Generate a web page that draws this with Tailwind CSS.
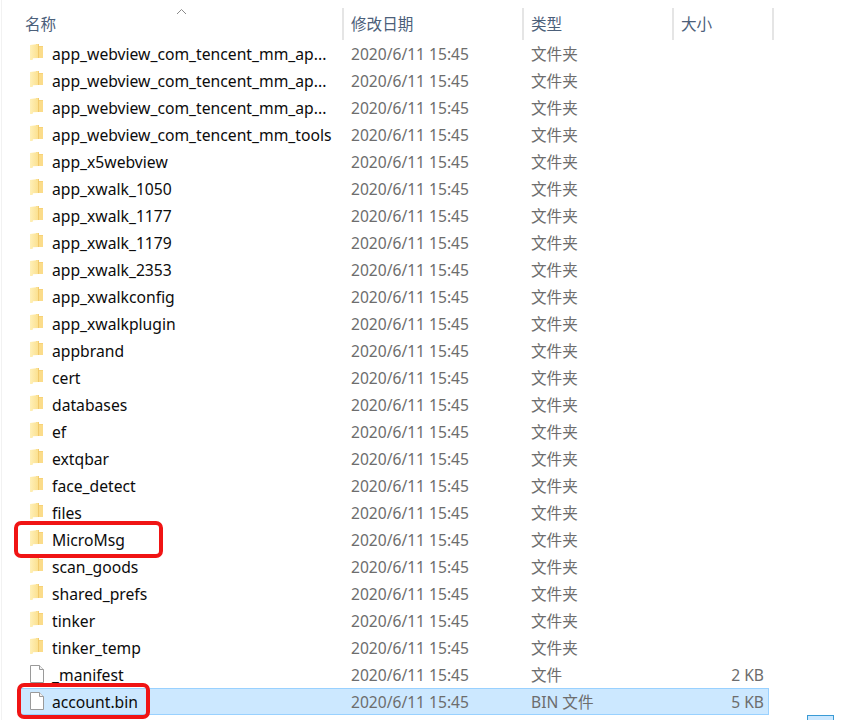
<!DOCTYPE html>
<html>
<head>
<meta charset="utf-8">
<script src="https://cdn.jsdelivr.net/npm/@tailwindcss/browser@4"></script>
</head>
<body class="bg-white">
<svg class="absolute w-0 h-0" width="0" height="0">
  <defs>
    <linearGradient id="g" x1="0" y1="0" x2="1" y2="0"><stop offset="0" stop-color="#fff0b8"/><stop offset="1" stop-color="#fbe08e"/></linearGradient>
    <symbol id="folder" viewBox="0 0 13 16">
      <path d="M6 0h2.500v2h4.500v12H6z" fill="#f7d277"/>
      <path d="M8.500 3H13v11H8.500z" fill="#fbdc8a"/>
      <path d="M0 1L8.500 0V14L3 14.300 2.500 16 0 16z" fill="url(#g)"/>
      <path d="M8.500 0V14" stroke="#eec465" stroke-width="0.8"/>
    </symbol>
    <symbol id="file" viewBox="0 0 16 20">
      <path d="M1.500 1.500h9l4 4v13h-13z" fill="#fff" stroke="#9a9a9a"/>
      <path d="M10.500 1.500v4h4" fill="#f0f0f0" stroke="#9a9a9a"/>
    </symbol>
  </defs>
</svg>
<main class="relative w-[845px] h-[720px] overflow-hidden font-['Noto_Sans','Noto_Sans_CJK_SC',sans-serif] text-[15.6px] leading-[28px] text-[#6d6d6d]">
  <div class="absolute left-[1px] top-0 bottom-0 w-px bg-[#f2f2f2]"></div>
  <svg class="absolute left-[176px] top-[8px]" width="11" height="7" viewBox="0 0 11 7" fill="none" stroke="#8a8a8a"><path d="M1 6L5.500 1.500L10 6"/></svg>

  <header class="mt-[8px] h-[32px] grid grid-cols-[343px_180px_150px_100px] text-[#4c607a] leading-[32px]">
    <div class="pl-[25px] border-r-2 border-[#e5e5e5] -mr-px">名称</div>
    <div class="pl-[8px] border-r-2 border-[#e5e5e5] -mr-px">修改日期</div>
    <div class="pl-[8px] border-r-2 border-[#e5e5e5] -mr-px">类型</div>
    <div class="pl-[8px] border-r-2 border-[#e5e5e5] -mr-px">大小</div>
  </header>

  <section id="list" class="w-[769px]">
    <div class="flex h-[27px]"><svg class="w-[13px] h-4 ml-[30px] mt-[4px]"><use href="#folder"/></svg><span class="w-[300px] pl-[9px] text-[15.7px] text-[#0c0c0c]">app_webview_com_tencent_mm_ap...</span><span class="w-[180px] pl-[8px]">2020/6/11 15:45</span><span class="w-[150px] pl-[8px]">文件夹</span></div>
    <div class="flex h-[27px]"><svg class="w-[13px] h-4 ml-[30px] mt-[4px]"><use href="#folder"/></svg><span class="w-[300px] pl-[9px] text-[15.7px] text-[#0c0c0c]">app_webview_com_tencent_mm_ap...</span><span class="w-[180px] pl-[8px]">2020/6/11 15:45</span><span class="w-[150px] pl-[8px]">文件夹</span></div>
    <div class="flex h-[27px]"><svg class="w-[13px] h-4 ml-[30px] mt-[4px]"><use href="#folder"/></svg><span class="w-[300px] pl-[9px] text-[15.7px] text-[#0c0c0c]">app_webview_com_tencent_mm_ap...</span><span class="w-[180px] pl-[8px]">2020/6/11 15:45</span><span class="w-[150px] pl-[8px]">文件夹</span></div>
    <div class="flex h-[27px]"><svg class="w-[13px] h-4 ml-[30px] mt-[4px]"><use href="#folder"/></svg><span class="w-[300px] pl-[9px] text-[15.7px] text-[#0c0c0c]">app_webview_com_tencent_mm_tools</span><span class="w-[180px] pl-[8px]">2020/6/11 15:45</span><span class="w-[150px] pl-[8px]">文件夹</span></div>
    <div class="flex h-[27px]"><svg class="w-[13px] h-4 ml-[30px] mt-[4px]"><use href="#folder"/></svg><span class="w-[300px] pl-[9px] text-[15.7px] text-[#0c0c0c]">app_x5webview</span><span class="w-[180px] pl-[8px]">2020/6/11 15:45</span><span class="w-[150px] pl-[8px]">文件夹</span></div>
    <div class="flex h-[27px]"><svg class="w-[13px] h-4 ml-[30px] mt-[4px]"><use href="#folder"/></svg><span class="w-[300px] pl-[9px] text-[15.7px] text-[#0c0c0c]">app_xwalk_1050</span><span class="w-[180px] pl-[8px]">2020/6/11 15:45</span><span class="w-[150px] pl-[8px]">文件夹</span></div>
    <div class="flex h-[27px]"><svg class="w-[13px] h-4 ml-[30px] mt-[4px]"><use href="#folder"/></svg><span class="w-[300px] pl-[9px] text-[15.7px] text-[#0c0c0c]">app_xwalk_1177</span><span class="w-[180px] pl-[8px]">2020/6/11 15:45</span><span class="w-[150px] pl-[8px]">文件夹</span></div>
    <div class="flex h-[27px]"><svg class="w-[13px] h-4 ml-[30px] mt-[4px]"><use href="#folder"/></svg><span class="w-[300px] pl-[9px] text-[15.7px] text-[#0c0c0c]">app_xwalk_1179</span><span class="w-[180px] pl-[8px]">2020/6/11 15:45</span><span class="w-[150px] pl-[8px]">文件夹</span></div>
    <div class="flex h-[27px]"><svg class="w-[13px] h-4 ml-[30px] mt-[4px]"><use href="#folder"/></svg><span class="w-[300px] pl-[9px] text-[15.7px] text-[#0c0c0c]">app_xwalk_2353</span><span class="w-[180px] pl-[8px]">2020/6/11 15:45</span><span class="w-[150px] pl-[8px]">文件夹</span></div>
    <div class="flex h-[27px]"><svg class="w-[13px] h-4 ml-[30px] mt-[4px]"><use href="#folder"/></svg><span class="w-[300px] pl-[9px] text-[15.7px] text-[#0c0c0c]">app_xwalkconfig</span><span class="w-[180px] pl-[8px]">2020/6/11 15:45</span><span class="w-[150px] pl-[8px]">文件夹</span></div>
    <div class="flex h-[27px]"><svg class="w-[13px] h-4 ml-[30px] mt-[4px]"><use href="#folder"/></svg><span class="w-[300px] pl-[9px] text-[15.7px] text-[#0c0c0c]">app_xwalkplugin</span><span class="w-[180px] pl-[8px]">2020/6/11 15:45</span><span class="w-[150px] pl-[8px]">文件夹</span></div>
    <div class="flex h-[27px]"><svg class="w-[13px] h-4 ml-[30px] mt-[4px]"><use href="#folder"/></svg><span class="w-[300px] pl-[9px] text-[15.7px] text-[#0c0c0c]">appbrand</span><span class="w-[180px] pl-[8px]">2020/6/11 15:45</span><span class="w-[150px] pl-[8px]">文件夹</span></div>
    <div class="flex h-[27px]"><svg class="w-[13px] h-4 ml-[30px] mt-[4px]"><use href="#folder"/></svg><span class="w-[300px] pl-[9px] text-[15.7px] text-[#0c0c0c]">cert</span><span class="w-[180px] pl-[8px]">2020/6/11 15:45</span><span class="w-[150px] pl-[8px]">文件夹</span></div>
    <div class="flex h-[27px]"><svg class="w-[13px] h-4 ml-[30px] mt-[4px]"><use href="#folder"/></svg><span class="w-[300px] pl-[9px] text-[15.7px] text-[#0c0c0c]">databases</span><span class="w-[180px] pl-[8px]">2020/6/11 15:45</span><span class="w-[150px] pl-[8px]">文件夹</span></div>
    <div class="flex h-[27px]"><svg class="w-[13px] h-4 ml-[30px] mt-[4px]"><use href="#folder"/></svg><span class="w-[300px] pl-[9px] text-[15.7px] text-[#0c0c0c]">ef</span><span class="w-[180px] pl-[8px]">2020/6/11 15:45</span><span class="w-[150px] pl-[8px]">文件夹</span></div>
    <div class="flex h-[27px]"><svg class="w-[13px] h-4 ml-[30px] mt-[4px]"><use href="#folder"/></svg><span class="w-[300px] pl-[9px] text-[15.7px] text-[#0c0c0c]">extqbar</span><span class="w-[180px] pl-[8px]">2020/6/11 15:45</span><span class="w-[150px] pl-[8px]">文件夹</span></div>
    <div class="flex h-[27px]"><svg class="w-[13px] h-4 ml-[30px] mt-[4px]"><use href="#folder"/></svg><span class="w-[300px] pl-[9px] text-[15.7px] text-[#0c0c0c]">face_detect</span><span class="w-[180px] pl-[8px]">2020/6/11 15:45</span><span class="w-[150px] pl-[8px]">文件夹</span></div>
    <div class="flex h-[27px]"><svg class="w-[13px] h-4 ml-[30px] mt-[4px]"><use href="#folder"/></svg><span class="w-[300px] pl-[9px] text-[15.7px] text-[#0c0c0c]">files</span><span class="w-[180px] pl-[8px]">2020/6/11 15:45</span><span class="w-[150px] pl-[8px]">文件夹</span></div>
    <div class="flex h-[27px]"><svg class="w-[13px] h-4 ml-[30px] mt-[4px]"><use href="#folder"/></svg><span class="w-[300px] pl-[9px] text-[15.7px] text-[#0c0c0c]">MicroMsg</span><span class="w-[180px] pl-[8px]">2020/6/11 15:45</span><span class="w-[150px] pl-[8px]">文件夹</span></div>
    <div class="flex h-[27px]"><svg class="w-[13px] h-4 ml-[30px] mt-[4px]"><use href="#folder"/></svg><span class="w-[300px] pl-[9px] text-[15.7px] text-[#0c0c0c]">scan_goods</span><span class="w-[180px] pl-[8px]">2020/6/11 15:45</span><span class="w-[150px] pl-[8px]">文件夹</span></div>
    <div class="flex h-[27px]"><svg class="w-[13px] h-4 ml-[30px] mt-[4px]"><use href="#folder"/></svg><span class="w-[300px] pl-[9px] text-[15.7px] text-[#0c0c0c]">shared_prefs</span><span class="w-[180px] pl-[8px]">2020/6/11 15:45</span><span class="w-[150px] pl-[8px]">文件夹</span></div>
    <div class="flex h-[27px]"><svg class="w-[13px] h-4 ml-[30px] mt-[4px]"><use href="#folder"/></svg><span class="w-[300px] pl-[9px] text-[15.7px] text-[#0c0c0c]">tinker</span><span class="w-[180px] pl-[8px]">2020/6/11 15:45</span><span class="w-[150px] pl-[8px]">文件夹</span></div>
    <div class="flex h-[27px]"><svg class="w-[13px] h-4 ml-[30px] mt-[4px]"><use href="#folder"/></svg><span class="w-[300px] pl-[9px] text-[15.7px] text-[#0c0c0c]">tinker_temp</span><span class="w-[180px] pl-[8px]">2020/6/11 15:45</span><span class="w-[150px] pl-[8px]">文件夹</span></div>
    <div class="flex h-[27px]"><svg class="w-4 h-5 ml-[29px] mt-[3px]"><use href="#file"/></svg><span class="w-[298px] pl-[7px] text-[15.7px] text-[#0c0c0c]">_manifest</span><span class="w-[180px] pl-[8px]">2020/6/11 15:45</span><span class="w-[150px] pl-[8px]">文件</span><span class="w-[91px] text-right">2 KB</span></div>
    <div class="flex h-[27px] ml-[20px] bg-[#cce8ff] border border-[#99d1ff] leading-[26px]"><svg class="w-4 h-5 ml-[8px] mt-[2px]"><use href="#file"/></svg><span class="w-[298px] pl-[7px] text-[15.7px] text-[#0c0c0c]">account.bin</span><span class="w-[180px] pl-[8px]">2020/6/11 15:45</span><span class="w-[150px] pl-[8px]">BIN 文件</span><span class="w-[91px] text-right">5 KB</span></div>
  </section>

  <div class="absolute left-[14px] top-[521px] w-[149px] h-[37px] border-4 border-[#f01414] rounded-[7px]"></div>
  <div class="absolute left-[17px] top-[683px] w-[133px] h-[36px] border-4 border-[#f01414] rounded-[7px]"></div>
  <div class="absolute left-[807px] top-[715px] w-[27px] h-[8px] bg-[#cce8ff] border border-[#3a9bd5]"></div>
</main>
</body>
</html>
